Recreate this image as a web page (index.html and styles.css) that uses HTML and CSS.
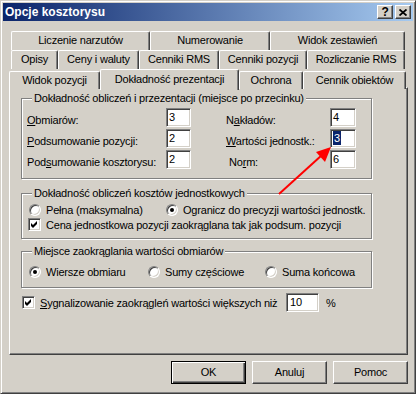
FILE: index.html
```html
<!DOCTYPE html>
<html lang="pl">
<head>
    <meta charset="UTF-8">
    <title>Opcje kosztorysu</title>
    <link rel="stylesheet" href="styles.css">
</head>
<body>
    <div class="window">
        <div class="titlebar">
            <span class="title">Opcje kosztorysu</span>
            <div class="caption-buttons">
                <span class="cap-btn">?</span>
                <span class="cap-btn close">
                    <svg width="8" height="7" viewBox="0 0 8 7"><path d="M0.5 0.5 L7.5 6.5 M7.5 0.5 L0.5 6.5" stroke="#000" stroke-width="1.8"/></svg>
                </span>
            </div>
        </div>

        <div class="dialog-body">
            <div class="tab-row row-1">
                <div class="tab">Liczenie narzutów</div>
                <div class="tab">Numerowanie</div>
                <div class="tab">Widok zestawień</div>
            </div>
            <div class="tab-row row-2">
                <div class="tab">Opisy</div>
                <div class="tab">Ceny i waluty</div>
                <div class="tab">Cenniki RMS</div>
                <div class="tab">Cenniki pozycji</div>
                <div class="tab">Rozliczanie RMS</div>
            </div>
            <div class="tab-row row-3">
                <div class="tab">Widok pozycji</div>
                <div class="tab active">Dokładność prezentacji</div>
                <div class="tab">Ochrona</div>
                <div class="tab">Cennik obiektów</div>
            </div>

            <div class="panel">
                <div class="group group-precision">
                    <span class="legend">Dokładność obliczeń i przezentacji (miejsce po przecinku)</span>
                    <div class="field-grid">
                        <span class="label"><u>O</u>bmiarów:</span>
                        <span class="edit">3</span>
                        <span></span>
                        <span class="label">N<u>a</u>kładów:</span>
                        <span class="edit">4</span>

                        <span class="label"><u>P</u>odsumowanie pozycji:</span>
                        <span class="edit">2</span>
                        <span></span>
                        <span class="label"><u>W</u>artości jednostk.:</span>
                        <span class="edit"><span class="selected-text">3</span></span>

                        <span class="label">Pod<u>s</u>umowanie kosztorysu:</span>
                        <span class="edit">2</span>
                        <span></span>
                        <span class="label indent">No<u>r</u>m:</span>
                        <span class="edit">6</span>
                    </div>
                </div>

                <div class="group group-unit">
                    <span class="legend">Dokładność obliczeń kosztów jednostkowych</span>
                    <div class="option-row unit-options">
                        <span class="option"><span class="radio"></span>Pełna (maksymalna)</span>
                        <span class="option"><span class="radio checked"></span>Ogranicz do precyzji wartości jednostk.</span>
                    </div>
                    <div class="option check-option">
                        <span class="checkbox">
                            <svg width="7" height="7" viewBox="0 0 7 7"><path d="M0 2 L2 4 L6 0 L6 3 L2 7 L0 5 Z" fill="#000"/></svg>
                        </span>
                        Cena jednostkowa pozycji zaokrąglana tak jak podsum. pozycji
                    </div>
                </div>

                <div class="group group-round">
                    <span class="legend">Miejsce zaokrąglania wartości obmiarów</span>
                    <div class="option-row round-options">
                        <span class="option"><span class="radio checked"></span>Wiersze obmiaru</span>
                        <span class="option"><span class="radio"></span>Sumy częściowe</span>
                        <span class="option"><span class="radio"></span>Suma końcowa</span>
                    </div>
                </div>

                <div class="signal-row">
                    <span class="checkbox">
                        <svg width="7" height="7" viewBox="0 0 7 7"><path d="M0 2 L2 4 L6 0 L6 3 L2 7 L0 5 Z" fill="#000"/></svg>
                    </span>
                    <span class="signal-label"><u>S</u>ygnalizowanie zaokrągleń wartości większych niż</span>
                    <span class="edit wide">10</span>
                    <span class="percent">%</span>
                </div>
            </div>

            <div class="button-row">
                <span class="btn default">OK</span>
                <span class="btn">Anuluj</span>
                <span class="btn">Pomoc</span>
            </div>
        </div>

        <!-- red annotation arrow -->
        <svg class="arrow" width="416" height="394" viewBox="0 0 416 394">
            <line x1="279" y1="194" x2="322" y2="155" stroke="#f00" stroke-width="2"/>
            <polygon points="331,147 316,152 325,162" fill="#f00"/>
        </svg>
    </div>
</body>
</html>
```

FILE: styles.css
```css
* {
    margin: 0;
    padding: 0;
    box-sizing: border-box;
}

body {
    background: #d4d0c8;
    font-family: 'Liberation Sans', Arial, sans-serif;
    font-size: 11px;
    letter-spacing: -0.2px;
    color: #000;
}

.window {
    position: relative;
    width: 416px;
    height: 394px;
    padding: 2px;
    background: #d4d0c8;
    border: 1px solid;
    border-color: #d4d0c8 #404040 #404040 #d4d0c8;
    box-shadow: inset 1px 1px #fff, inset -1px -1px #808080;
}

/* Title bar */
.titlebar {
    height: 18px;
    display: flex;
    align-items: center;
    justify-content: space-between;
    padding: 0 2px;
    background: linear-gradient(90deg, #0a246a, #a6caf0);
}

.title {
    color: #fff;
    font-weight: bold;
    font-size: 12px;
    line-height: 14px;
    letter-spacing: 0;
}

.caption-buttons {
    display: flex;
    gap: 2px;
}

.cap-btn {
    width: 16px;
    height: 14px;
    display: flex;
    align-items: center;
    justify-content: center;
    background: #d4d0c8;
    border: 1px solid;
    border-color: #fff #404040 #404040 #fff;
    box-shadow: inset -1px -1px #808080;
    font-weight: bold;
    font-size: 12px;
    line-height: 12px;
}

.dialog-body {
    padding: 10px 5px 0 6px;
}

/* Tabs */
.tab-row {
    display: grid;
    height: 19px;
}

.row-1 {
    margin-left: 2px;
    grid-template-columns: 139px 120px 135px;
}

.row-2 {
    margin-left: 2px;
    grid-template-columns: 47px 81px 80px 88px 98px;
}

.row-3 {
    height: 18px;
    align-items: end;
    grid-template-columns: 91px 139px 64px 103px;
}

.tab {
    height: 19px;
    line-height: 17px;
    text-align: center;
    white-space: nowrap;
    background: #d4d0c8;
    border-top: 1px solid #fff;
    border-left: 1px solid #fff;
    border-right: 1px solid #404040;
    border-radius: 2px 2px 0 0;
    box-shadow: inset -1px 0 #808080;
}

.row-3 .tab {
    height: 18px;
    line-height: 17px;
}

.row-3 .tab.active {
    position: relative;
    z-index: 1;
    height: 21px;
    margin-bottom: -1px;
    line-height: 19px;
}

/* Page panel */
.panel {
    height: 268px;
    padding: 10px 0 0 11px;
    border: 1px solid;
    border-color: #fff #404040 #404040 #fff;
    box-shadow: inset -1px -1px #808080;
}

.group {
    position: relative;
    width: 351px;
    border: 1px solid #808080;
    box-shadow: inset 1px 1px #fff, 1px 1px #fff;
}

.legend {
    position: absolute;
    top: -7px;
    left: 10px;
    padding: 0 2px;
    line-height: 13px;
    background: #d4d0c8;
    white-space: nowrap;
}

.group-precision {
    padding: 9px 0 9px 5px;
}

.field-grid {
    display: grid;
    grid-template-columns: 139px 25px 35px 104px 26px;
    grid-auto-rows: 19px;
    row-gap: 2px;
}

.label {
    line-height: 13px;
    padding-top: 6px;
    white-space: nowrap;
}

.label.indent {
    padding-left: 3px;
}

.edit {
    display: block;
    height: 19px;
    padding-left: 2px;
    line-height: 17px;
    background: #fff;
    border: 1px solid;
    border-color: #808080 #fff #fff #808080;
    box-shadow: inset 1px 1px #404040, inset -1px -1px #d4d0c8;
}

.selected-text {
    display: inline-block;
    padding: 0 1px;
    line-height: 14px;
    background: #0a246a;
    color: #fff;
}

.group-unit {
    margin-top: 14px;
    padding: 10px 0 7px 7px;
}

.group-round {
    margin-top: 12px;
    padding: 14px 0 9px 7px;
}

.option-row {
    display: grid;
    height: 12px;
}

.unit-options {
    grid-template-columns: 137px auto;
}

.round-options {
    grid-template-columns: 119px 117px auto;
}

.option {
    display: flex;
    align-items: center;
    gap: 5px;
    white-space: nowrap;
    line-height: 12px;
}

.check-option {
    margin-top: 2px;
    margin-left: -1px;
    gap: 5px;
    height: 13px;
}

.radio {
    position: relative;
    width: 12px;
    height: 12px;
    flex: none;
    border-radius: 50%;
    background: #fff;
    border: 1px solid;
    border-color: #808080 #fff #fff #808080;
    box-shadow: inset 1px 1px #404040, inset -1px -1px #d4d0c8;
}

.radio.checked::after {
    content: "";
    position: absolute;
    top: 3px;
    left: 3px;
    width: 4px;
    height: 4px;
    border-radius: 50%;
    background: #000;
}

.checkbox {
    width: 13px;
    height: 13px;
    flex: none;
    display: flex;
    align-items: center;
    justify-content: center;
    background: #fff;
    border: 1px solid;
    border-color: #808080 #fff #fff #808080;
    box-shadow: inset 1px 1px #404040, inset -1px -1px #d4d0c8;
}

.signal-row {
    display: flex;
    align-items: center;
    height: 19px;
    margin-top: 5px;
    margin-left: 1px;
}

.signal-label {
    width: 251px;
    padding-left: 5px;
    white-space: nowrap;
}

.edit.wide {
    width: 33px;
    padding-left: 3px;
}

.percent {
    margin-left: 7px;
}

/* Dialog buttons */
.button-row {
    display: flex;
    justify-content: flex-end;
    gap: 6px;
    margin-top: 6px;
}

.btn {
    width: 75px;
    height: 23px;
    line-height: 21px;
    text-align: center;
    border: 1px solid;
    border-color: #fff #404040 #404040 #fff;
    box-shadow: inset -1px -1px #808080;
}

.btn.default {
    border-color: #000;
    box-shadow: inset 1px 1px #fff, inset -1px -1px #404040, inset -2px -2px #808080;
}

.arrow {
    position: absolute;
    top: -1px;
    left: -1px;
    pointer-events: none;
}
```
